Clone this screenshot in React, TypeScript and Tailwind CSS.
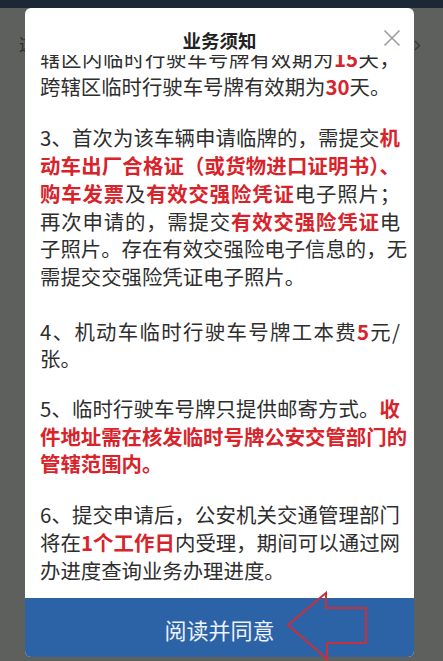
import React from "react";

const R = ({ children }: { children: React.ReactNode }) => (
  <span className="font-bold text-[#d8232b]">{children}</span>
);

const Line = ({ children, last }: { children: React.ReactNode; last?: boolean }) => (
  <span
    className={
      last
        ? "block whitespace-nowrap"
        : "block whitespace-nowrap text-justify [text-align-last:justify]"
    }
  >
    {children}
  </span>
);

export default function App() {
  return (
    <div className="relative h-[661px] w-[443px] overflow-hidden bg-[#5e605e] font-['Noto_Sans_CJK_SC','Noto_Sans',sans-serif]">
      {/* status bar */}
      <div className="h-[8px] bg-[#1d2836]" />

      {/* dimmed page behind the dialog */}
      <div className="absolute left-[19px] top-[32px] text-[17px] leading-[24px] text-[#2f302f]">这</div>
      <svg className="absolute left-[414px] top-[40px]" width="7" height="11" viewBox="0 0 7 11">
        <path d="M1 1 L5.5 5.5 L1 10" fill="none" stroke="#3a3b3a" strokeWidth="1.6" />
      </svg>

      {/* dialog */}
      <div className="relative ml-[25px] flex h-[649px] w-[389px] flex-col overflow-hidden rounded-[6px] bg-white">
        <div className="relative h-[47px] shrink-0 pt-[22px] text-center text-[18.5px] font-bold leading-[20px] text-[#222]">
          业务须知
          <svg className="absolute left-[358px] top-[21px]" width="18" height="18" viewBox="0 0 18 18">
            <path d="M1.5 1.5 L16.5 16.5 M16.5 1.5 L1.5 16.5" stroke="#9d9d9d" strokeWidth="1.6" fill="none" />
          </svg>
        </div>

        <div className="flex-1 overflow-hidden">
          <div className="-mt-[10px] ml-[15px] w-[360px] text-[20.4px] leading-[27.7px] text-[#2e2e2e]">
            <p>
              <Line>辖区内临时行驶车号牌有效期为<R>15</R>天，</Line>
              <Line last>跨辖区临时行驶车号牌有效期为<R>30</R>天。</Line>
            </p>
            <p className="mt-[24px]">
              <Line>3、首次为该车辆申请临牌的，需提交<R>机</R></Line>
              <Line><R>动车出厂合格证（或货物进口证明书）、</R></Line>
              <Line><R>购车发票</R>及<R>有效交强险凭证</R>电子照片；</Line>
              <Line>再次申请的，需提交<R>有效交强险凭证</R>电</Line>
              <Line>子照片。存在有效交强险电子信息的，无</Line>
              <Line last>需提交交强险凭证电子照片。</Line>
            </p>
            <p className="mt-[27px]">
              <Line>4、机动车临时行驶车号牌工本费<R>5</R>元/</Line>
              <Line last>张。</Line>
            </p>
            <p className="mt-[22px]">
              <Line>5、临时行驶车号牌只提供邮寄方式。<R>收</R></Line>
              <Line><R>件地址需在核发临时号牌公安交管部门的</R></Line>
              <Line last><R>管辖范围内。</R></Line>
            </p>
            <p className="mt-[23px]">
              <Line>6、提交申请后，公安机关交通管理部门</Line>
              <Line>将在<R>1个工作日</R>内受理，期间可以通过网</Line>
              <Line last>办进度查询业务办理进度。</Line>
            </p>
          </div>
        </div>

        <div className="flex h-[59px] shrink-0 items-center justify-center bg-[#2b63a6] pt-[3px] text-[22px] leading-[28px] text-[#edf2f9]">
          阅读并同意
        </div>
      </div>

      {/* red annotation arrow */}
      <svg className="pointer-events-none absolute left-0 top-0" width="443" height="661" viewBox="0 0 443 661">
        <polygon
          points="288,625 326,593 326,608 366,608 366,643 327,643 327,659"
          fill="none"
          stroke="#c8303b"
          strokeWidth="2"
          strokeLinejoin="miter"
        />
      </svg>
    </div>
  );
}
